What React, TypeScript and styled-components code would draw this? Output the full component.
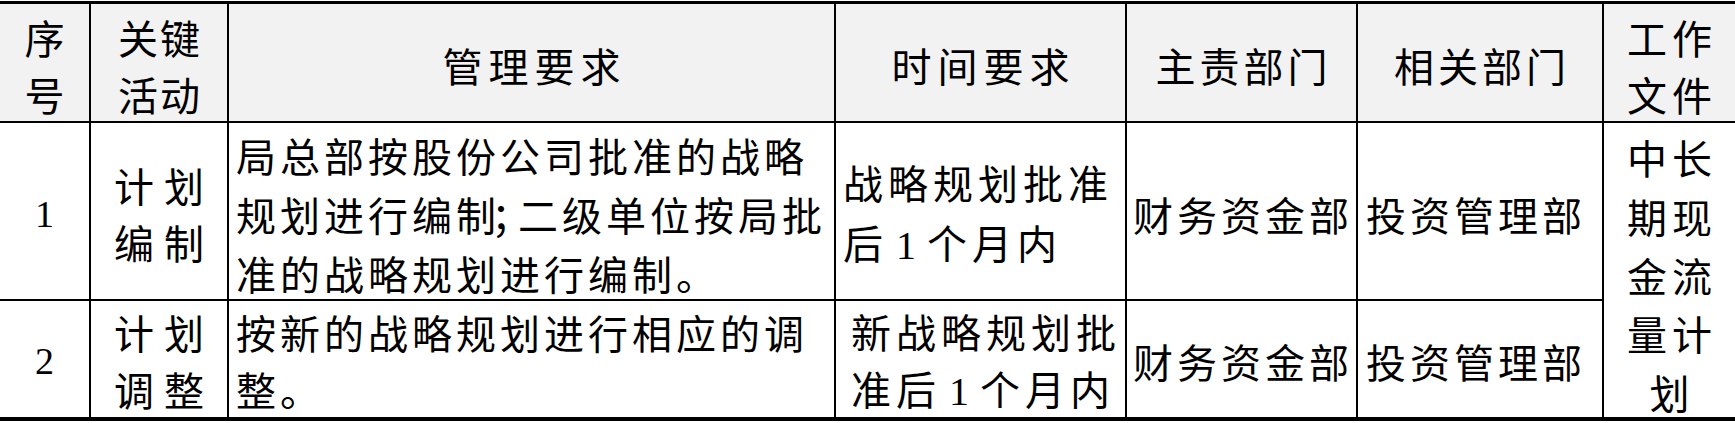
import React from "react";
import styled, { createGlobalStyle } from "styled-components";

const GlobalStyle = createGlobalStyle`
  html, body {
    margin: 0;
    padding: 0;
    background: #fff;
  }
  body {
    font-family: "Noto Sans CJK SC", "Noto Sans", sans-serif;
    color: #000;
  }
`;

const Sheet = styled.div`
  display: grid;
  grid-template-columns: 91px 138px 607px 291px 231px 246px 131px;
  grid-template-rows: 119px 178px 116px;
  margin-top: 1px;
  border-top: 3px solid #000;
  border-bottom: 4px solid #000;
`;

interface CellProps {
  $head?: boolean;
  $align?: "center" | "left";
  $pad?: number;
  $top?: number;
  $lastCol?: boolean;
  $lastRow?: boolean;
  $span?: number;
}

const Cell = styled.div<CellProps>`
  box-sizing: border-box;
  display: flex;
  align-items: center;
  justify-content: ${(p) => (p.$align === "left" ? "flex-start" : "center")};
  padding: ${(p) => p.$top ?? 6}px 0 0 ${(p) => p.$pad ?? 0}px;
  background: ${(p) => (p.$head ? "#f2f2f2" : "#fff")};
  border-right: ${(p) => (p.$lastCol ? "none" : "2px solid #000")};
  border-bottom: ${(p) => (p.$lastRow ? "none" : "2px solid #000")};
  grid-row: ${(p) => (p.$span ? `span ${p.$span}` : "auto")};
  overflow: visible;
  min-width: 0;
`;

interface TextProps {
  $spread?: number;
  $lh?: number;
  $center?: boolean;
}

const Text = styled.span<TextProps>`
  display: block;
  font-size: 40px;
  line-height: ${(p) => p.$lh ?? 57}px;
  letter-spacing: ${(p) => p.$spread ?? 4}px;
  text-align: ${(p) => (p.$center ? "center" : "left")};
  white-space: nowrap;
  /* balance the trailing letter-spacing when centred */
  padding-left: ${(p) => (p.$center ? p.$spread ?? 4 : 0)}px;
`;

const Num = styled.span`
  font-family: "Liberation Serif", "Times New Roman", serif;
  font-size: 38px;
  letter-spacing: 0;
`;

const InlineNum = styled.span`
  font-family: "Liberation Serif", "Times New Roman", serif;
  padding: 0 6px 0 8px;
`;

// punctuation squeezed the way a word processor compresses it
const Tight = styled.span<{ $squeeze: number }>`
  letter-spacing: ${(p) => p.$squeeze}px;
`;

const Lines = ({ lines }: { lines: React.ReactNode[] }) => (
  <>
    {lines.map((l, i) => (
      <React.Fragment key={i}>
        {i > 0 && <br />}
        {l}
      </React.Fragment>
    ))}
  </>
);

const App = () => {
  return (
    <>
      <GlobalStyle />
      <Sheet>
        {/* header */}
        <Cell $head>
          <Text $center>
            <Lines lines={["序", "号"]} />
          </Text>
        </Cell>
        <Cell $head>
          <Text $center $spread={2}>
            <Lines lines={["关键", "活动"]} />
          </Text>
        </Cell>
        <Cell $head>
          <Text $center $spread={6}>管理要求</Text>
        </Cell>
        <Cell $head>
          <Text $center $spread={6}>时间要求</Text>
        </Cell>
        <Cell $head>
          <Text $center>主责部门</Text>
        </Cell>
        <Cell $head>
          <Text $center>相关部门</Text>
        </Cell>
        <Cell $head $lastCol>
          <Text $center $spread={5}>
            <Lines lines={["工作", "文件"]} />
          </Text>
        </Cell>

        {/* row 1 */}
        <Cell>
          <Num>1</Num>
        </Cell>
        <Cell>
          <Text $center $spread={10}>
            <Lines lines={["计划", "编制"]} />
          </Text>
        </Cell>
        <Cell $align="left" $pad={7}>
          <Text $lh={59}>
            <Lines
              lines={[
                "局总部按股份公司批准的战略",
                <>
                  规划进行编<Tight $squeeze={-5}>制</Tight>
                  <Tight $squeeze={-13}>；</Tight>二级单位按局批
                </>,
                "准的战略规划进行编制。",
              ]}
            />
          </Text>
        </Cell>
        <Cell $align="left" $pad={7}>
          <Text $spread={5} $lh={60}>
            <Lines
              lines={[
                "战略规划批准",
                <>
                  后<InlineNum>1</InlineNum>个月内
                </>,
              ]}
            />
          </Text>
        </Cell>
        <Cell $align="left" $pad={6}>
          <Text>财务资金部</Text>
        </Cell>
        <Cell $align="left" $pad={8}>
          <Text>投资管理部</Text>
        </Cell>
        <Cell $lastCol $lastRow $span={2} $top={10}>
          <Text $center $spread={5} $lh={58.7}>
            <Lines lines={["中长", "期现", "金流", "量计", "划"]} />
          </Text>
        </Cell>

        {/* row 2 */}
        <Cell $lastRow $top={4}>
          <Num>2</Num>
        </Cell>
        <Cell $lastRow $top={4}>
          <Text $center $spread={10}>
            <Lines lines={["计划", "调整"]} />
          </Text>
        </Cell>
        <Cell $lastRow $align="left" $pad={7} $top={4}>
          <Text>
            <Lines lines={["按新的战略规划进行相应的调", "整。"]} />
          </Text>
        </Cell>
        <Cell $lastRow $align="left" $pad={15} $top={4}>
          <Text $spread={5}>
            <Lines
              lines={[
                "新战略规划批",
                <>
                  准后<InlineNum>1</InlineNum>个月内
                </>,
              ]}
            />
          </Text>
        </Cell>
        <Cell $lastRow $align="left" $pad={6} $top={4}>
          <Text>财务资金部</Text>
        </Cell>
        <Cell $lastRow $align="left" $pad={8} $top={4}>
          <Text>投资管理部</Text>
        </Cell>
      </Sheet>
    </>
  );
};

export default App;
